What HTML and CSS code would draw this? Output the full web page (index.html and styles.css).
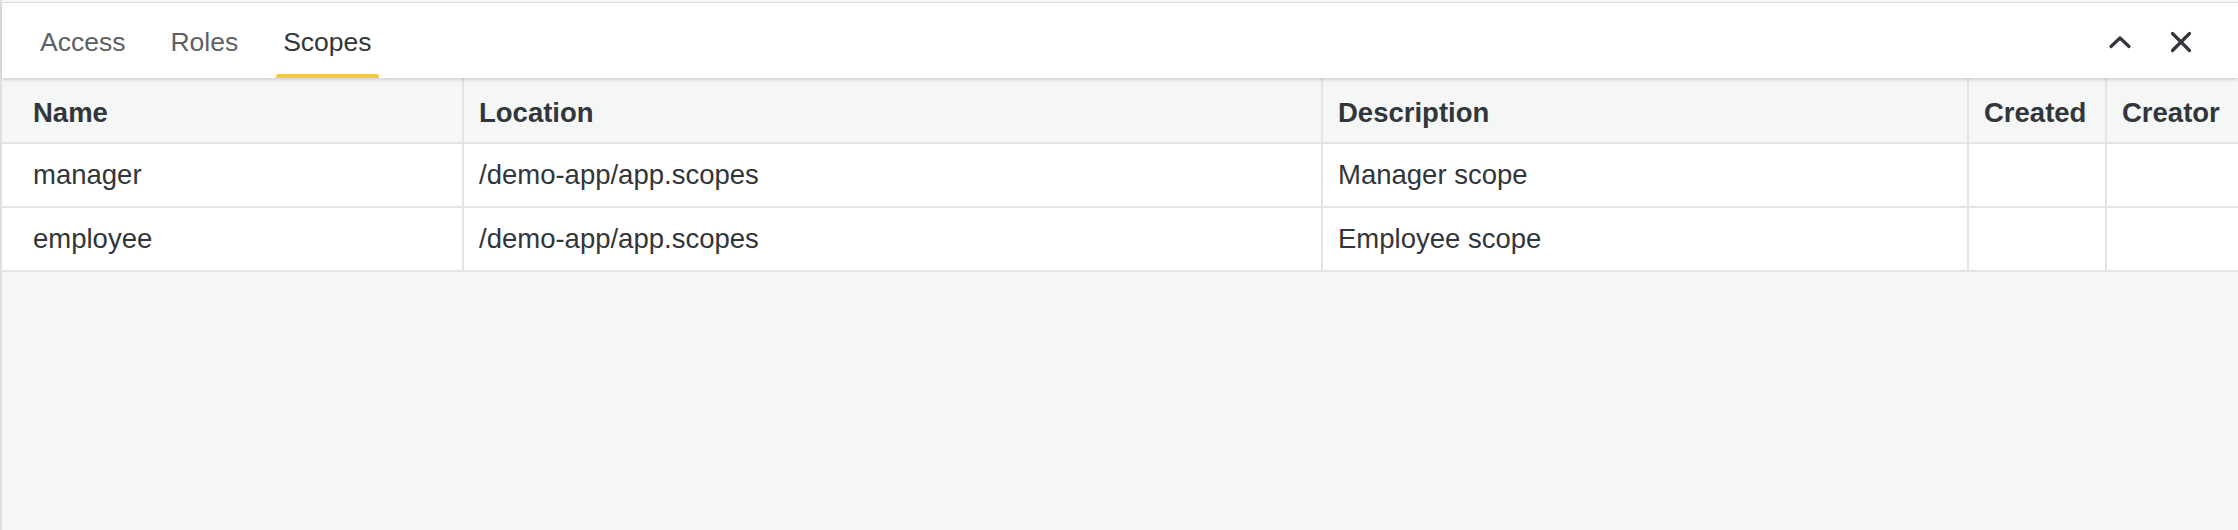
FILE: index.html
```html
<!DOCTYPE html>
<html lang="en">
<head>
<meta charset="utf-8">
<title>Scopes</title>
<link rel="stylesheet" href="styles.css">
</head>
<body>
<div class="panel">
  <header class="tabbar">
    <nav class="tabs">
      <div class="tab"><span class="tab-label">Access</span><span class="tab-ind"></span></div>
      <div class="tab"><span class="tab-label">Roles</span><span class="tab-ind"></span></div>
      <div class="tab active"><span class="tab-label">Scopes</span><span class="tab-ind"></span></div>
    </nav>
    <div class="actions">
      <button class="icon-btn" aria-label="Collapse">
        <svg width="24" height="14" viewBox="0 0 24 14"><polyline points="3,11.5 12,3 21,11.5" fill="none" stroke="#32363a" stroke-width="3.2" stroke-linecap="round" stroke-linejoin="round"/></svg>
      </button>
      <button class="icon-btn close" aria-label="Close">
        <svg width="22" height="22" viewBox="0 0 22 22"><path d="M2.5 2.5 L19.5 19.5 M19.5 2.5 L2.5 19.5" fill="none" stroke="#32363a" stroke-width="3.2" stroke-linecap="round"/></svg>
      </button>
    </div>
  </header>
  <div class="table-wrap">
    <div class="grid">
      <div class="cell head first">Name</div>
      <div class="cell head">Location</div>
      <div class="cell head">Description</div>
      <div class="cell head">Created</div>
      <div class="cell head">Creator</div>

      <div class="cell first">manager</div>
      <div class="cell">/demo-app/app.scopes</div>
      <div class="cell">Manager scope</div>
      <div class="cell"></div>
      <div class="cell"></div>

      <div class="cell first">employee</div>
      <div class="cell">/demo-app/app.scopes</div>
      <div class="cell">Employee scope</div>
      <div class="cell"></div>
      <div class="cell"></div>
    </div>
  </div>
</div>
</body>
</html>
```
FILE: styles.css
```css
* { box-sizing: border-box; }
html, body { margin: 0; padding: 0; }
body {
  background: #f7f7f7;
  font-family: "Liberation Sans", Arial, sans-serif;
  color: #32363a;
  width: 2238px;
  height: 530px;
  overflow: hidden;
}
.panel {
  height: 530px;
  border-left: 2px solid #e0e0e0;
  padding-top: 2px;
  background: #f7f7f7;
}
.tabbar {
  position: relative;
  z-index: 1;
  height: 76px;
  background: #ffffff;
  border-top: 1px solid #dadada;
  box-shadow: 0 2px 3px rgba(0, 0, 0, 0.14);
  display: flex;
  justify-content: space-between;
  align-items: stretch;
}
.tabs {
  display: flex;
  gap: 31px;
  padding-left: 31px;
}
.tab {
  display: flex;
  flex-direction: column;
  padding-top: 8px;
}
.tab-label {
  flex: 1;
  display: flex;
  align-items: center;
  padding: 0 7px;
  font-size: 26.5px;
  color: #5e6164;
  white-space: nowrap;
}
.tab.active .tab-label { color: #32363a; }
.tab-ind {
  height: 4px;
  border-radius: 3px 3px 0 0;
  background: transparent;
}
.tab.active .tab-ind { background: #f5c842; }
.actions {
  display: flex;
  align-items: center;
  gap: 38px;
  padding-right: 46px;
  padding-top: 2px;
}
.icon-btn {
  border: 0;
  background: none;
  padding: 0;
  display: flex;
  align-items: center;
  justify-content: center;
}
.table-wrap {
  overflow: hidden;
}
.grid {
  display: grid;
  grid-template-columns: 462px 859px 646px 138px 160px;
  width: max-content;
}
.cell {
  height: 64px;
  padding-left: 15px;
  border-right: 2px solid #e4e4e4;
  border-bottom: 2px solid #e4e4e4;
  background: #ffffff;
  font-size: 27.5px;
  display: flex;
  align-items: center;
  white-space: nowrap;
}
.cell.first { padding-left: 31px; }
.cell.head {
  height: 66px;
  padding-top: 5px;
  background: #f5f6f6;
  font-weight: bold;
}
```
